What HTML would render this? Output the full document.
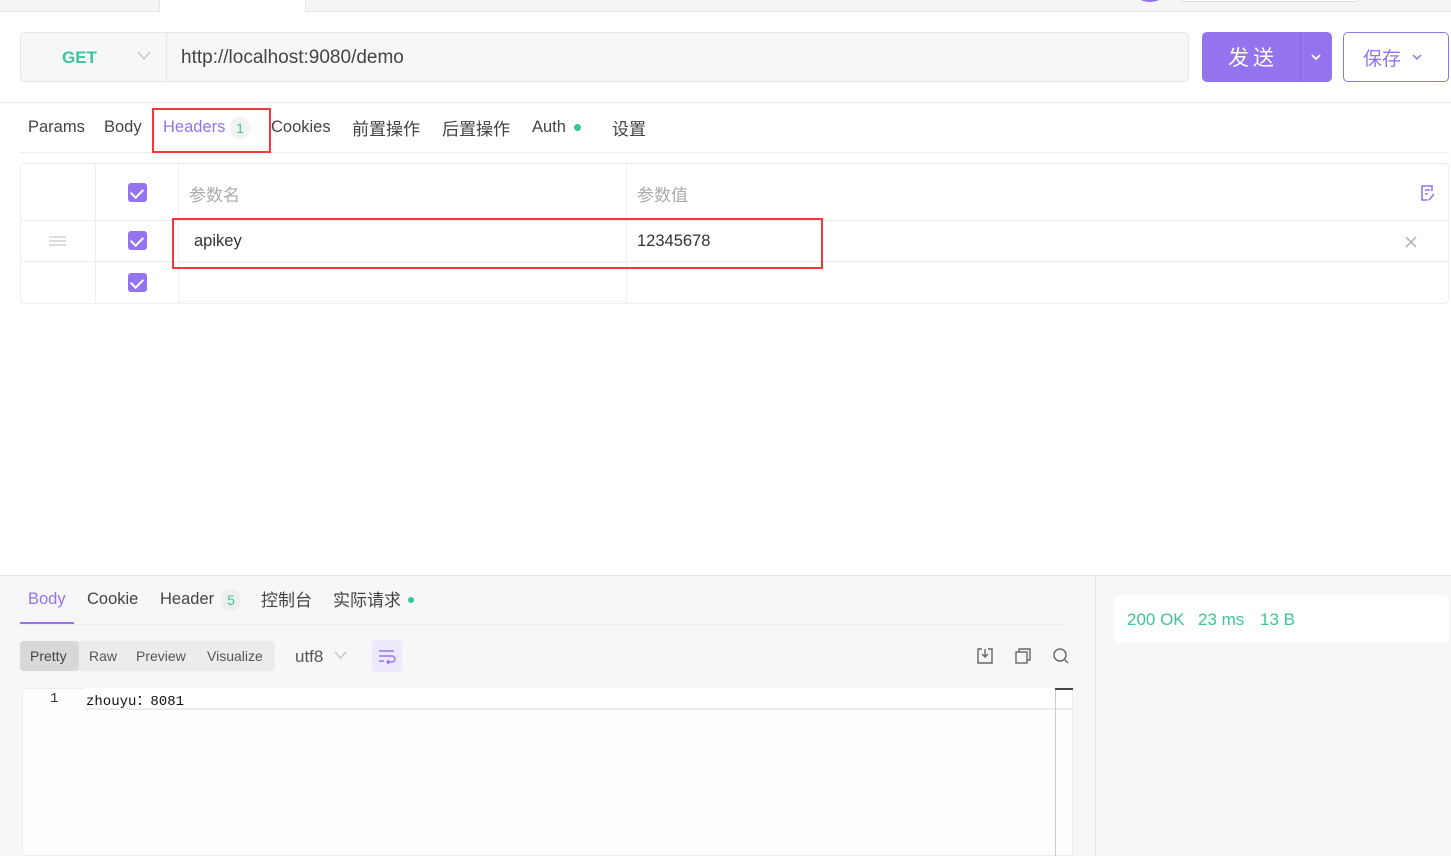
<!DOCTYPE html>
<html><head><meta charset="utf-8"><style>
*{box-sizing:border-box;margin:0;padding:0}
body{width:1451px;height:856px;position:relative;overflow:hidden;background:#fff;font-family:"Liberation Sans","Noto Sans CJK SC",sans-serif;color:#333}
.a{position:absolute}
.t{font-size:17px;color:#444;white-space:nowrap}
.cb{position:absolute;width:19px;height:19px;background:#9373ee;border-radius:3px}
.cb:after{content:"";position:absolute;left:5px;top:3px;width:6px;height:10px;border:solid #fff;border-width:0 2px 2px 0;transform:rotate(45deg)}
.red{position:absolute;border:2.5px solid #f5363b}
</style></head><body>
<div class="a" style="left:0;top:0;width:1451px;height:12px;background:#f5f5f7;border-bottom:1px solid #e6e6e8"></div>
<div class="a" style="left:159px;top:0;width:147px;height:12px;background:#fff;border-left:1px solid #e6e6e8;border-right:1px solid #e6e6e8"></div>
<div class="a" style="left:1138px;top:-10px;width:24px;height:12px;border-radius:50%;background:#9373ee"></div>
<div class="a" style="left:1181px;top:-4px;width:178px;height:6px;border:1px solid #ddd;border-radius:3px;background:#fff"></div>

<div class="a" style="left:20px;top:32px;width:1169px;height:50px;background:#f7f7f8;border:1px solid #e6e6e8;border-radius:5px"></div>
<div class="a" style="left:166px;top:33px;width:1px;height:48px;background:#e6e6e8"></div>
<div class="a t" style="left:62px;top:48px;font-weight:bold;color:#3cc59a;font-size:17px">GET</div>
<svg class="a" style="left:137px;top:51px" width="14" height="10"><path d="M1 1l6 7 6-7" fill="none" stroke="#bbb" stroke-width="1.2"/></svg>
<div class="a t" style="left:181px;top:47px;font-size:19px;color:#444">http://localhost:9080/demo</div>

<div class="a" style="left:1202px;top:32px;width:130px;height:50px;background:#9373ee;border-radius:5px"></div>
<div class="a" style="left:1300px;top:32px;width:1px;height:50px;background:#8566dd"></div>
<div class="a" style="left:1228px;top:42px;color:#fff;font-size:21px;letter-spacing:4px">发送</div>
<svg class="a" style="left:1310px;top:53px" width="12" height="8"><path d="M2 2l4 4 4-4" fill="none" stroke="#fff" stroke-width="1.8"/></svg>
<div class="a" style="left:1343px;top:32px;width:106px;height:50px;border:1px solid #9373ee;border-radius:5px;background:#fff"></div>
<div class="a" style="left:1363px;top:44px;color:#9373ee;font-size:19px">保存</div>
<svg class="a" style="left:1411px;top:53px" width="12" height="8"><path d="M2 2l4 4 4-4" fill="none" stroke="#9373ee" stroke-width="1.5"/></svg>

<div class="a" style="left:0;top:102px;width:1451px;height:1px;background:#e8e8ea"></div>
<div class="a t" style="left:28px;top:118px;font-size:16.5px">Params</div>
<div class="a t" style="left:104px;top:118px;font-size:16.5px">Body</div>
<div class="a t" style="left:163px;top:118px;color:#9373ee;font-size:16.5px">Headers</div>
<div class="a" style="left:230px;top:117px;width:20px;height:22px;border-radius:10px;background:#f3f3f5;color:#3cc59a;font-size:14px;text-align:center;line-height:22px">1</div>
<div class="a t" style="left:271px;top:118px;font-size:16.5px">Cookies</div>
<div class="a t" style="left:352px;top:115px">前置操作</div>
<div class="a t" style="left:442px;top:115px">后置操作</div>
<div class="a t" style="left:532px;top:118px;font-size:16.5px">Auth</div>
<div class="a" style="left:574px;top:124px;width:7px;height:7px;border-radius:50%;background:#3cc59a"></div>
<div class="a t" style="left:612px;top:115px">设置</div>
<div class="a" style="left:20px;top:152px;width:1429px;height:1px;background:#eeeef0"></div>

<div class="a" style="left:20px;top:163px;width:1429px;height:141px;border:1px solid #eeeef0;border-radius:4px"></div>
<div class="a" style="left:20px;top:220px;width:1429px;height:1px;background:#eeeef0"></div>
<div class="a" style="left:20px;top:261px;width:1429px;height:1px;background:#eeeef0"></div>
<div class="a" style="left:95px;top:163px;width:1px;height:141px;background:#eeeef0"></div>
<div class="a" style="left:178px;top:163px;width:1px;height:141px;background:#eeeef0"></div>
<div class="a" style="left:626px;top:163px;width:1px;height:141px;background:#eeeef0"></div>
<div class="a" style="left:178px;top:262px;width:449px;height:40px;border:1px solid #efeff5"></div>
<div class="cb" style="left:128px;top:183px"></div>
<div class="cb" style="left:128px;top:231px"></div>
<div class="cb" style="left:128px;top:273px"></div>
<div class="a" style="left:49px;top:236px;width:17px;height:10px;border-top:2px solid #ddd;border-bottom:2px solid #ddd"></div>
<div class="a" style="left:49px;top:240px;width:17px;height:2px;background:#ddd"></div>
<div class="a t" style="left:189px;top:181px;color:#aaa">参数名</div>
<div class="a t" style="left:637px;top:181px;color:#aaa">参数值</div>
<div class="a t" style="left:194px;top:232px;color:#333;font-size:16.5px">apikey</div>
<div class="a t" style="left:637px;top:232px;color:#333;font-size:16.5px">12345678</div>
<svg class="a" style="left:1420px;top:184px" width="16" height="18"><path d="M12 7V2H2v14h6M5 6h5M5 10h3M9 16l5-6" fill="none" stroke="#9373ee" stroke-width="1.6"/></svg>
<svg class="a" style="left:1405px;top:236px" width="12" height="12"><path d="M1 1l10 10M11 1L1 11" stroke="#aaa" stroke-width="1.3"/></svg>
<div class="red" style="left:152px;top:108px;width:119px;height:45px"></div>
<div class="red" style="left:172px;top:218px;width:651px;height:51px"></div>

<div class="a" style="left:0;top:575px;width:1451px;height:281px;background:#f7f7f9;border-top:1px solid #e6e6e8"></div>
<div class="a" style="left:1095px;top:576px;width:1px;height:280px;background:#e6e6e8"></div>
<div class="a t" style="left:28px;top:590px;color:#9373ee;font-size:16.5px">Body</div>
<div class="a" style="left:20px;top:622px;width:54px;height:3px;background:#9373ee"></div>
<div class="a t" style="left:87px;top:590px;font-size:16.5px">Cookie</div>
<div class="a t" style="left:160px;top:590px;font-size:16.5px">Header</div>
<div class="a" style="left:221px;top:589px;width:20px;height:22px;border-radius:10px;background:#eeeef0;color:#3cc59a;font-size:14px;text-align:center;line-height:22px">5</div>
<div class="a t" style="left:261px;top:586px">控制台</div>
<div class="a t" style="left:333px;top:586px">实际请求</div>
<div class="a" style="left:408px;top:597px;width:6px;height:6px;border-radius:50%;background:#3cc59a"></div>
<div class="a" style="left:20px;top:624px;width:1046px;height:1px;background:#ececef"></div>

<div class="a" style="left:20px;top:641px;width:255px;height:30px;background:#ececee;border-radius:4px"></div>
<div class="a" style="left:20px;top:641px;width:59px;height:30px;background:#d8d8da;border-radius:4px"></div>
<div class="a" style="left:30px;top:648px;font-size:14px;color:#444">Pretty</div>
<div class="a" style="left:89px;top:648px;font-size:14px;color:#555">Raw</div>
<div class="a" style="left:136px;top:648px;font-size:14px;color:#555">Preview</div>
<div class="a" style="left:207px;top:648px;font-size:14px;color:#555">Visualize</div>
<div class="a t" style="left:295px;top:647px;color:#555">utf8</div>
<svg class="a" style="left:334px;top:651px" width="13" height="9"><path d="M1 1l5.5 6 5.5-6" fill="none" stroke="#bbb" stroke-width="1.2"/></svg>
<div class="a" style="left:372px;top:640px;width:30px;height:32px;background:#ede8fb;border-radius:4px"></div>
<svg class="a" style="left:378px;top:648px" width="18" height="16"><path d="M1 3h15M1 8h13a3 3 0 010 6H9M11 12l-2 2 2 2M1 13h5" fill="none" stroke="#9373ee" stroke-width="1.4"/></svg>
<svg class="a" style="left:976px;top:647px" width="18" height="18"><path d="M6 2H2v14h14V2h-4M9 2v8M6 7l3 3 3-3" fill="none" stroke="#666" stroke-width="1.4"/></svg>
<svg class="a" style="left:1014px;top:647px" width="18" height="18"><rect x="2" y="5" width="11" height="11" fill="none" stroke="#666" stroke-width="1.4"/><path d="M5 5V2h11v11h-3" fill="none" stroke="#666" stroke-width="1.4"/></svg>
<svg class="a" style="left:1052px;top:647px" width="18" height="18"><circle cx="8" cy="8" r="6" fill="none" stroke="#666" stroke-width="1.4"/><path d="M12.5 12.5l3.5 3.5" stroke="#666" stroke-width="1.4"/></svg>

<div class="a" style="left:22px;top:688px;width:1051px;height:168px;background:#fefefc;border:1px solid #ececec"></div>
<div class="a" style="left:85px;top:688px;width:987px;height:22px;border-bottom:2px solid #ececec;background:#fff"></div>
<div class="a" style="left:1055px;top:688px;width:1px;height:168px;background:#ccc"></div>
<div class="a" style="left:1055px;top:688px;width:18px;height:2px;background:#444"></div>
<div class="a" style="left:50px;top:691px;font-family:'Liberation Mono','Noto Sans CJK SC',monospace;font-size:14px;color:#333">1</div>
<div class="a" style="left:86px;top:690px;font-family:'Liberation Mono','Noto Sans CJK SC',monospace;font-size:14px;color:#111">zhouyu：8081</div>

<div class="a" style="left:1114px;top:595px;width:335px;height:48px;background:#fff;border-radius:5px"></div>
<div class="a" style="left:1127px;top:610px;font-size:17px;color:#3cc59a">200 OK</div>
<div class="a" style="left:1198px;top:610px;font-size:17px;color:#3cc59a">23 ms</div>
<div class="a" style="left:1260px;top:610px;font-size:17px;color:#3cc59a">13 B</div>
</body></html>
